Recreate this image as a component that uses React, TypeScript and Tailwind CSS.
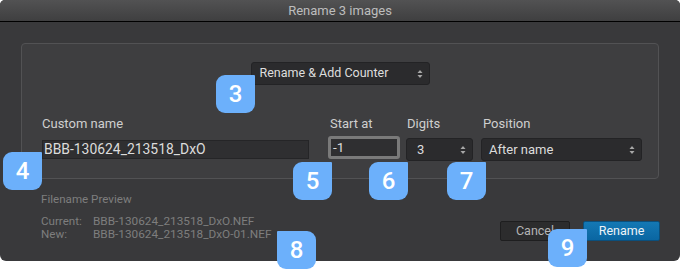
import React from 'react';

const font = { fontFamily: 'Roboto, "Liberation Sans", sans-serif' };

function Arrows() {
  return (
    <svg width="6" height="10" viewBox="0 0 6 10" className="shrink-0">
      <path d="M3 1 L5.5 4 L0.5 4 Z" fill="#a8a8a8" />
      <path d="M3 9 L5.5 6 L0.5 6 Z" fill="#a8a8a8" />
    </svg>
  );
}

interface BadgeProps {
  n: number;
  x: number;
  y: number;
  sharp?: 'tr' | 'tl';
}

function Badge({ n, x, y, sharp = 'tr' }: BadgeProps) {
  return (
    <div
      className={`absolute w-[39px] h-[38px] bg-[#6cb0fb] rounded-[9px] flex items-center justify-center text-white text-[24px] font-medium ${
        sharp === 'tr' ? 'rounded-tr-[1px]' : 'rounded-tl-[1px]'
      }`}
      style={{ left: x, top: y }}
    >
      {n}
    </div>
  );
}

export default function App() {
  return (
    <div className="relative w-[680px] h-[271px] bg-white overflow-hidden" style={font}>
      <div className="h-[261px] bg-[#39393b] rounded-t-[5px] rounded-b-[6px] flex flex-col">
        {/* title bar */}
        <div className="h-[22px] shrink-0 bg-linear-to-b from-[#525253] to-[#3f3f40] border-b border-black rounded-t-[5px] flex items-center justify-center text-[13px] text-[#bdbdbd]">
          Rename 3 images
        </div>

        {/* options panel */}
        <div className="mx-[21px] mt-[21px] h-[136px] border border-[#525254] bg-[#3e3e40] rounded-[4px] pt-[18px] flex flex-col">
          <div className="self-center w-[179px] h-[23px] bg-[#2b2b2d] border border-[#232325] rounded-[3px] flex items-center justify-between pl-[8px] pr-[6px] text-[12.5px] text-[#dedede]">
            <span>Rename &amp; Add Counter</span>
            <Arrows />
          </div>

          <div className="flex mt-[31px] pl-[20px] text-[13px] text-[#cfcfcf]">
            <div className="w-[267px] flex flex-col">
              <div className="h-[16px] leading-[16px]">Custom name</div>
              <div className="mt-[8px] h-[19px] bg-[#2f2f31] border border-[#252527] flex items-center pl-[1px] text-[13.9px] text-[#dcdcdc]">
                BBB-130624_213518_DxO
              </div>
            </div>
            <div className="w-[72px] ml-[19px] flex flex-col">
              <div className="h-[16px] leading-[16px] pl-[2px]">Start at</div>
              <div className="mt-[4px] h-[23px] border-[3px] border-[#7a7a7a] rounded-[3px] bg-[#2f2f31] flex items-center pl-[2px] text-[13.5px] text-[#dcdcdc]">
                -1
              </div>
            </div>
            <div className="w-[67px] ml-[6px] flex flex-col">
              <div className="h-[16px] leading-[16px] pl-[1px]">Digits</div>
              <div className="mt-[6px] h-[23px] bg-[#2b2b2d] border border-[#232325] rounded-[3px] flex items-center justify-between pl-[10px] pr-[6px] text-[#dcdcdc]">
                <span>3</span>
                <Arrows />
              </div>
            </div>
            <div className="w-[161px] ml-[8px] flex flex-col">
              <div className="h-[16px] leading-[16px] pl-[2px]">Position</div>
              <div className="mt-[6px] h-[23px] bg-[#2b2b2d] border border-[#232325] rounded-[3px] flex items-center justify-between pl-[7px] pr-[6px] text-[#dcdcdc]">
                <span>After name</span>
                <Arrows />
              </div>
            </div>
          </div>
        </div>

        {/* preview + buttons */}
        <div className="flex justify-between pl-[41px] pr-[20px] text-[11.6px] text-[#7e7e7e]">
          <div className="flex flex-col pt-[13px]">
            <div className="leading-[14px]">Filename Preview</div>
            <div className="mt-[9px] flex leading-[13px]">
              <span className="w-[52px]">Current:</span>
              <span className="text-[11.8px]">BBB-130624_213518_DxO.NEF</span>
            </div>
            <div className="flex leading-[13px]">
              <span className="w-[52px]">New:</span>
              <span className="text-[11.8px]">BBB-130624_213518_DxO-01.NEF</span>
            </div>
          </div>
          <div className="flex items-start gap-[13px] pt-[42px]">
            <div className="w-[70px] h-[20px] bg-[#2c2c2d] border border-[#1e1e1f] rounded-[2px] flex items-center justify-center text-[12.5px] text-[#b5b5b5]">
              Cancel
            </div>
            <div className="w-[77px] h-[20px] bg-linear-to-b from-[#1478b4] to-[#0a66a2] border border-[#0b4f7c] rounded-[2px] flex items-center justify-center text-[12.5px] text-[#eef4f8]">
              Rename
            </div>
          </div>
        </div>
      </div>

      <Badge n={3} x={216} y={75} />
      <Badge n={4} x={3} y={152} />
      <Badge n={5} x={293} y={162} />
      <Badge n={6} x={369} y={162} />
      <Badge n={7} x={447} y={162} />
      <Badge n={8} x={277} y={231} sharp="tl" />
      <Badge n={9} x={548} y={229} />
    </div>
  );
}
